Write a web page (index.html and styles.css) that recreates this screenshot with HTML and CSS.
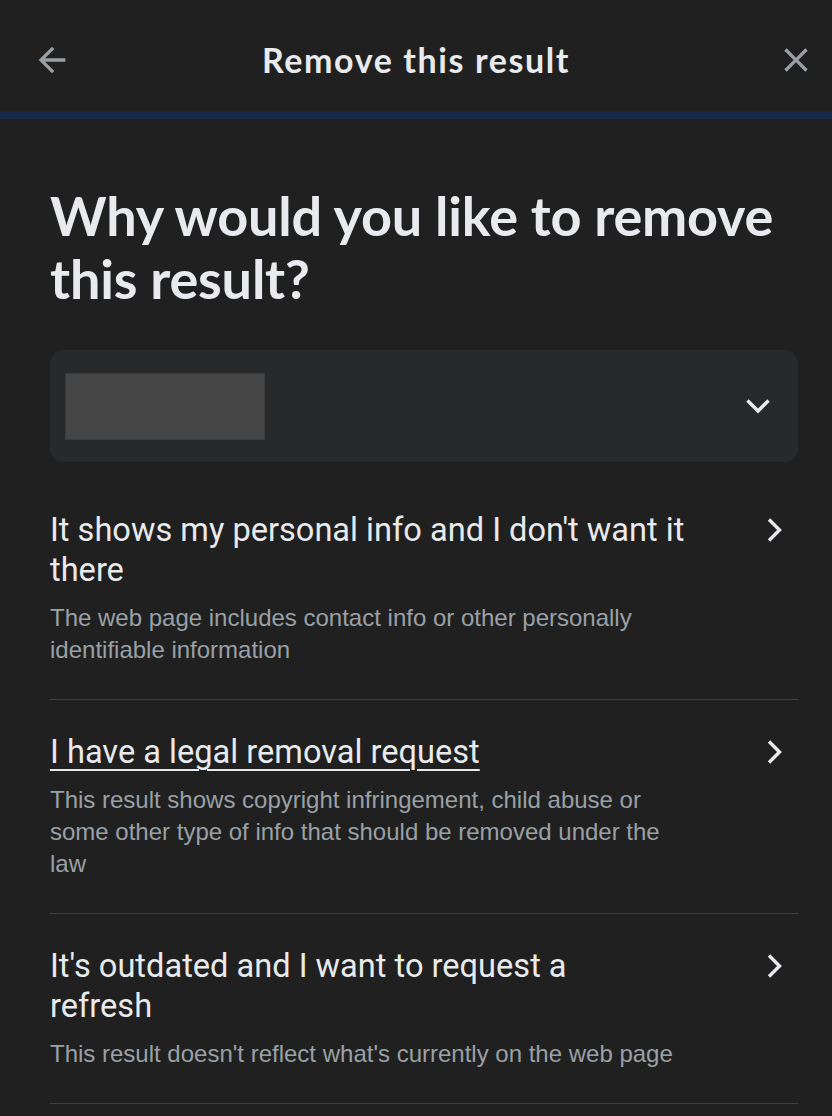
FILE: index.html
```html
<!DOCTYPE html>
<html lang="en">
<head>
<meta charset="utf-8">
<title>Remove this result</title>
<link rel="stylesheet" href="styles.css">
</head>
<body>
<div class="dialog">
  <header class="topbar">
    <button class="icon-btn back" aria-label="Back">
      <svg viewBox="0 0 24 24" width="40" height="40"><path d="M20 11H7.83l5.59-5.59L12 4l-8 8 8 8 1.41-1.41L7.83 13H20v-2z"/></svg>
    </button>
    <h1 class="topbar-title">Remove this result</h1>
    <button class="icon-btn close" aria-label="Close">
      <svg viewBox="0 0 24 24" width="40" height="40"><path d="M19 6.41L17.59 5 12 10.59 6.41 5 5 6.41 10.59 12 5 17.59 6.41 19 12 13.41 17.59 19 19 17.59 13.41 12z"/></svg>
    </button>
  </header>
  <div class="progress"></div>
  <main class="content">
    <h2 class="question">Why would you like to remove this result?</h2>
    <div class="select">
      <div class="select-value"></div>
      <svg class="chev-down" viewBox="0 0 28 28" width="28" height="28"><polyline points="3.5,8.5 14,19 24.5,8.5"/></svg>
    </div>
    <ul class="options">
      <li class="option">
        <div class="option-text">
          <div class="option-title">It shows my personal info and I don't want it there</div>
          <div class="option-desc">The web page includes contact info or other personally identifiable information</div>
        </div>
        <svg class="chev-right" viewBox="0 0 28 28" width="28" height="28"><polyline points="9,3.5 19.5,14 9,24.5"/></svg>
      </li>
      <li class="option">
        <div class="option-text">
          <div class="option-title"><span class="link">I have a legal removal request</span></div>
          <div class="option-desc">This result shows copyright infringement, child abuse or some other type of info that should be removed under the law</div>
        </div>
        <svg class="chev-right" viewBox="0 0 28 28" width="28" height="28"><polyline points="9,3.5 19.5,14 9,24.5"/></svg>
      </li>
      <li class="option">
        <div class="option-text">
          <div class="option-title">It's outdated and I want to request a<br>refresh</div>
          <div class="option-desc">This result doesn't reflect what's currently on the web page</div>
        </div>
        <svg class="chev-right" viewBox="0 0 28 28" width="28" height="28"><polyline points="9,3.5 19.5,14 9,24.5"/></svg>
      </li>
    </ul>
  </main>
</div>
</body>
</html>
```

FILE: styles.css
```css
* { box-sizing: border-box; }

html, body {
  margin: 0;
  padding: 0;
  background: #202020;
}

body {
  font-family: Roboto, "Liberation Sans", sans-serif;
  color: #e8eaed;
}

.dialog {
  min-height: 1116px;
  background: #202020;
}

.topbar {
  height: 111px;
  padding-top: 8px;
  display: grid;
  grid-template-columns: 120px 1fr 120px;
  align-items: center;
}

.icon-btn {
  background: none;
  border: 0;
  padding: 0;
  width: 40px;
  height: 40px;
  display: block;
  cursor: pointer;
}

.icon-btn svg { display: block; fill: #9aa0a6; }

.back { justify-self: start; margin-left: 32px; }
.close { justify-self: end; margin-right: 16px; }

.topbar-title {
  margin: 0;
  text-align: center;
  font-family: Lato, "Open Sans", sans-serif;
  font-weight: 700;
  font-size: 34px;
  letter-spacing: 1.6px;
  line-height: 40px;
  color: #e8eaed;
}

.progress {
  height: 8px;
  background: #19294a;
}

.content {
  padding: 0 34px 0 50px;
}

.question {
  margin: 65px 0 40px;
  font-family: Lato, "Open Sans", sans-serif;
  font-weight: 700;
  font-size: 54px;
  letter-spacing: -0.18px;
  line-height: 63px;
  color: #e8eaed;
}

.select {
  height: 112px;
  border-radius: 14px;
  background: #28292b;
  padding-left: 15px;
  display: flex;
  align-items: center;
  justify-content: space-between;
}

.select-value {
  width: 200px;
  height: 67px;
  background: #454545;
  border: 1px solid #3b3b3b;
}

.chev-down {
  margin-right: 26px;
  fill: none;
  stroke: #e8eaed;
  stroke-width: 3.4;
}

.options {
  list-style: none;
  margin: 16px 0 0;
  padding: 0;
}

.option {
  display: flex;
  align-items: flex-start;
  justify-content: space-between;
  padding: 32px 0 33px;
  border-bottom: 1px solid #3c4043;
}

.option-text {
  width: 640px;
}

.option-title {
  font-family: Roboto, "Liberation Sans", sans-serif;
  font-size: 32.6px;
  line-height: 40px;
  color: #e8eaed;
}

.link {
  text-decoration: underline;
  text-underline-offset: 6px;
  text-decoration-thickness: 2px;
}

.option-desc {
  margin-top: 12px;
  font-family: "Liberation Sans", Arial, sans-serif;
  font-size: 24px;
  line-height: 32px;
  color: #9aa0a6;
}

.chev-right {
  flex: none;
  margin: 6px 10px 0 0;
  fill: none;
  stroke: #e8eaed;
  stroke-width: 3.4;
}
```
